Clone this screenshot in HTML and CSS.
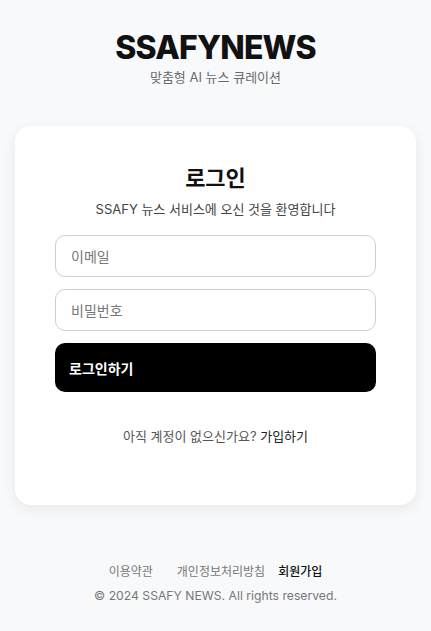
FILE: index.html
```html
<!DOCTYPE html>
<html lang="ko">
<head>
<meta charset="utf-8">
<link rel="stylesheet" href="styles.css">
</head>
<body>
<div class="page">
  <header class="brand">
    <h1 class="logo">SSAFYNEWS</h1>
    <p class="tagline">맞춤형 AI 뉴스 큐레이션</p>
  </header>
  <main class="card">
    <h2 class="card-title">로그인</h2>
    <p class="card-sub">SSAFY 뉴스 서비스에 오신 것을 환영합니다</p>
    <form class="form">
      <input class="field" type="email" placeholder="이메일">
      <input class="field" type="password" placeholder="비밀번호">
      <button class="submit" type="button">로그인하기</button>
    </form>
    <p class="signup">아직 계정이 없으신가요? <a class="signup-link">가입하기</a></p>
  </main>
  <footer class="footer">
    <nav class="links">
      <a class="link">이용약관</a>
      <a class="link">개인정보처리방침</a>
      <a class="link strong">회원가입</a>
    </nav>
    <p class="copy">© 2024 SSAFY NEWS. All rights reserved.</p>
  </footer>
</div>
</body>
</html>
```
FILE: styles.css
```css
* { box-sizing: border-box; }
html, body { margin: 0; padding: 0; }
body {
  background: #f8f9fb;
  font-family: Inter, "Noto Sans CJK KR", sans-serif;
  color: #111;
}
.page {
  display: flex;
  flex-direction: column;
  align-items: center;
  padding: 28px 15px 0;
}
.brand { text-align: center; }
.logo {
  margin: 0;
  font-size: 32px;
  font-weight: 800;
  line-height: 40px;
  letter-spacing: -0.8px;
  color: #111;
}
.tagline {
  margin: 0;
  font-size: 13px;
  line-height: 18px;
  color: #6b6b6b;
}
.card {
  margin-top: 40px;
  width: 100%;
  background: #fff;
  border-radius: 16px;
  box-shadow: 0 4px 14px rgba(0,0,0,0.07);
  padding: 37px 40px 60px;
  text-align: center;
}
.card-title {
  margin: 0;
  font-size: 22px;
  line-height: 30px;
  font-weight: 700;
}
.card-sub {
  margin: 7px 0 0;
  font-size: 13px;
  line-height: 18px;
  color: #444;
}
.form {
  display: flex;
  flex-direction: column;
  gap: 12px;
  margin-top: 17px;
}
.field {
  height: 42px;
  border: 1px solid #cfcfcf;
  border-radius: 10px;
  padding: 0 15px;
  font-family: inherit;
  font-size: 14px;
  background: #fff;
}
.field::placeholder { color: #777; }
.submit {
  height: 49px;
  border: none;
  border-radius: 10px;
  background: #000;
  color: #fff;
  font-family: inherit;
  font-size: 14px;
  font-weight: 700;
  text-align: left;
  padding: 0 14px;
}
.signup {
  margin: 35px 0 0;
  font-size: 13px;
  line-height: 18px;
  color: #555;
}
.signup-link { color: #222; font-weight: 400; }
.footer {
  margin-top: 58px;
  text-align: center;
}
.links {
  display: flex;
  justify-content: center;
  gap: 13px;
}
.link {
  font-size: 12px;
  line-height: 18px;
  color: #777;
}
.link:first-child { margin-right: 11px; }
.link.strong { color: #111; font-weight: 500; }
.copy {
  margin: 6px 0 0;
  font-size: 12.2px;
  line-height: 18px;
  color: #777;
}
```
